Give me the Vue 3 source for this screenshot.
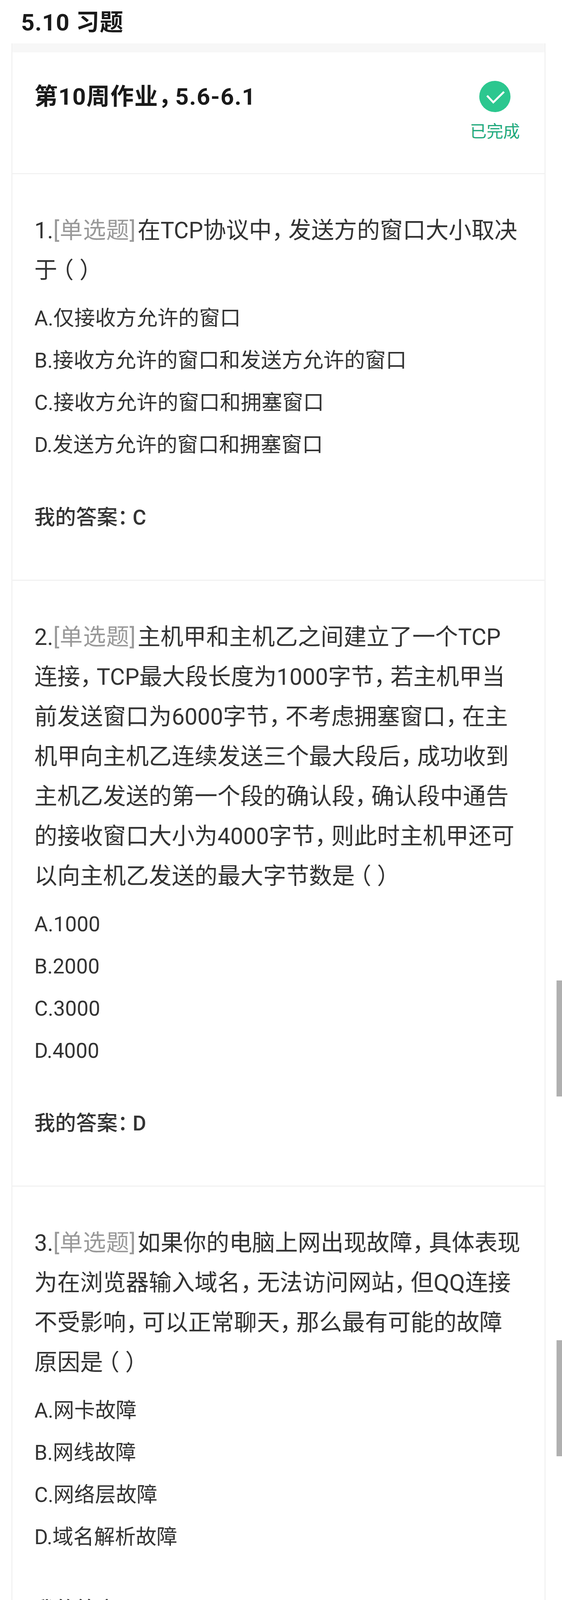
<script setup>
const questions = [
  {
    num: '1.',
    text: '在TCP协议中，发送方的窗口大小取决于（ ）',
    options: ['A.仅接收方允许的窗口', 'B.接收方允许的窗口和发送方允许的窗口', 'C.接收方允许的窗口和拥塞窗口', 'D.发送方允许的窗口和拥塞窗口'],
    answer: 'C',
  },
  {
    num: '2.',
    text: '主机甲和主机乙之间建立了一个TCP连接，TCP最大段长度为1000字节，若主机甲当前发送窗口为6000字节，不考虑拥塞窗口，在主机甲向主机乙连续发送三个最大段后，成功收到主机乙发送的第一个段的确认段，确认段中通告的接收窗口大小为4000字节，则此时主机甲还可以向主机乙发送的最大字节数是（ ）',
    options: ['A.1000', 'B.2000', 'C.3000', 'D.4000'],
    answer: 'D',
  },
  {
    num: '3.',
    text: '如果你的电脑上网出现故障，具体表现为在浏览器输入域名，无法访问网站，但QQ连接不受影响，可以正常聊天，那么最有可能的故障原因是（ ）',
    options: ['A.网卡故障', 'B.网线故障', 'C.网络层故障', 'D.域名解析故障'],
    answer: 'D',
  },
]

// 全角标点在原图里更窄，单独包一层收紧
const parts = (text) => text.split(/(，|：|（ ）)/)
const partClass = (p) => (p === '（ ）' ? 'paren' : p === '，' || p === '：' ? 'punct' : '')
</script>

<template>
  <div class="page">
    <h1 class="page-title">5.10 习题</h1>
    <div class="card">
      <div class="strip"></div>
      <div class="card-head">
        <h2 class="work-title"><span v-for="(p, i) in parts('第10周作业，5.6-6.1')" :key="i" :class="partClass(p)">{{ p }}</span></h2>
        <div class="status">
          <svg class="status-icon" viewBox="0 0 80 80">
            <circle cx="40" cy="40" r="40" fill="#2cc78f" />
            <path d="M20 38 L36 55 L63.5 28" fill="none" stroke="#fff" stroke-width="5" />
          </svg>
          <span class="status-text">已完成</span>
        </div>
      </div>
      <div v-for="q in questions" :key="q.num" class="question">
        <p class="question-text">{{ q.num }}<span class="type">[单选题]</span><span v-for="(p, i) in parts(q.text)" :key="i" :class="partClass(p)">{{ p }}</span></p>
        <ul class="options">
          <li v-for="opt in q.options" :key="opt">{{ opt }}</li>
        </ul>
        <p class="answer"><span v-for="(p, i) in parts('我的答案：' + q.answer)" :key="i" :class="partClass(p)">{{ p }}</span></p>
      </div>
    </div>
    <div class="scroll-mark first"></div>
    <div class="scroll-mark second"></div>
  </div>
</template>

<style scoped>
.page {
  position: relative;
  width: 1440px;
  height: 4186px;
  overflow: hidden;
  background: #fff;
  font-family: Roboto, "Noto Sans CJK SC", sans-serif;
  color: #333;
}
.page-title {
  margin: 0;
  height: 111px;
  padding: 20px 0 0 54px;
  box-sizing: border-box;
  font-size: 60px;
  line-height: 76px;
  font-weight: 700;
  letter-spacing: 1px;
  color: #1a1a1a;
}
.card {
  margin: 0 42px 0 29px;
  border: solid #f2f2f2;
  border-width: 0 3px;
}
.strip {
  height: 23px;
  background: #f7f7f7;
}
.card-head {
  height: 312px;
  box-sizing: border-box;
  display: flex;
  justify-content: space-between;
  padding: 73px 63px 0 56px;
  border-bottom: 3px solid #f2f2f2;
}
.work-title {
  margin: 0;
  font-size: 60px;
  line-height: 82px;
  font-weight: 700;
  letter-spacing: 1.5px;
  color: #1a1a1a;
}
.status {
  display: flex;
  flex-direction: column;
  align-items: center;
  gap: 20px;
}
.status-icon {
  width: 80px;
  height: 80px;
}
.status-text {
  font-size: 42.67px;
  line-height: 60px;
  color: #20a97c;
}
.question {
  padding: 93px 55px 129px 56px;
  border-bottom: 3px solid #f2f2f2;
}
.question-text {
  margin: 0;
  font-size: 58.67px;
  line-height: 102px;
}
.type {
  margin-right: 4px;
  letter-spacing: 1px;
  color: #999;
}
.punct {
  letter-spacing: -0.28em;
}
.paren {
  margin-left: -0.28em;
}
.options {
  list-style: none;
  margin: 18px 0 0;
  padding: 0;
  font-size: 53.33px;
  line-height: 108px;
}
.answer {
  margin: 102px 0 0;
  font-size: 53.33px;
  line-height: 60px;
  font-weight: 500;
}
.scroll-mark {
  position: absolute;
  left: 1426px;
  width: 14px;
  background: #b0b0b0;
}
.scroll-mark.first {
  top: 2510px;
  height: 297px;
}
.scroll-mark.second {
  top: 3431px;
  height: 297px;
}
</style>

<style>
html, body {
  margin: 0;
  background: #fff;
}
</style>
